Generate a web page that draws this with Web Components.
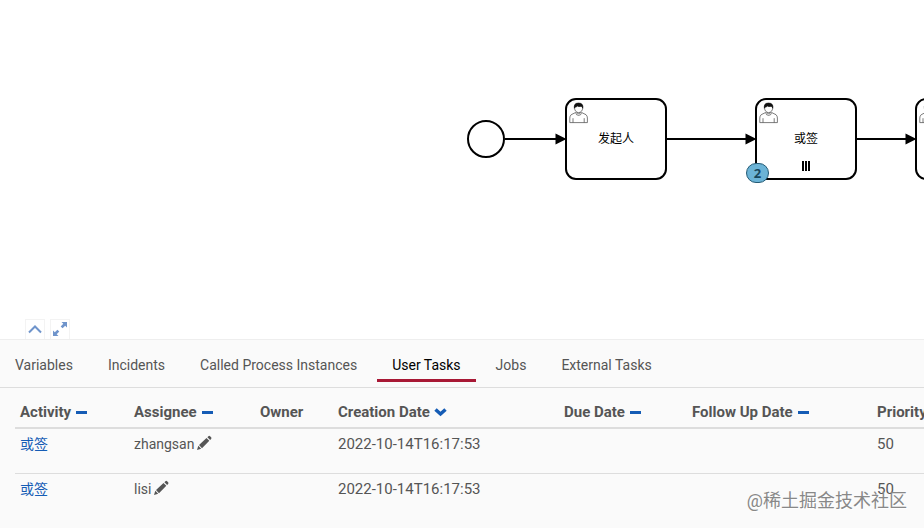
<!DOCTYPE html>
<html lang="en">
<head>
<meta charset="utf-8">
<title>Process instance</title>
<style>
html, body { height: 100%; }
body { margin: 0; background: #fff; overflow: hidden; font-family: Roboto, "Noto Sans CJK SC", sans-serif; font-size: 14px; line-height: 20px; color: #555; }
</style>
</head>
<body>
<process-page></process-page>
<script>
const define = (name, html, setup) => {
  const template = document.createElement('template');
  template.innerHTML = html;
  customElements.define(name, class extends HTMLElement {
    constructor() {
      super();
      this.attachShadow({ mode: 'open' }).append(template.content.cloneNode(true));
    }
    connectedCallback() { if (setup) setup(this, this.shadowRoot); }
  });
};

define('bpmn-task', `
<style>
:host { position: absolute; box-sizing: border-box; width: 102px; height: 82px; border: 2px solid #000; border-radius: 11px; background: #fff; color: #000; display: grid; place-items: center; font-size: 12px; line-height: 16px; }
.user { position: absolute; left: 2px; top: 2px; }
.multi { position: absolute; left: 45px; bottom: 7px; display: none; }
:host([multi]) .multi { display: block; }
</style>
<svg class="user" width="20" height="22" viewBox="0 0 20 22" fill="#fff" stroke="#444" stroke-width=".7" aria-hidden="true">
  <path d="M6.6 10.500 2.200 12.700Q.8 14 .8 16v4.600h17.600V16q0-2-1.400-3.300l-4.400-2.200q-.4 2.900-3 2.900t-3-2.900Z"/>
  <path d="M4 20.500v-4.300M15.200 20.500v-4.300" fill="none"/>
  <path d="M8 9.400v1.500q1.600 1.700 3.200 0V9.400" />
  <ellipse cx="9.600" cy="6.200" rx="4" ry="4.400"/>
  <path d="M5.400 6.200Q4.500 1.200 9.400 1.100q5.200 0 4.400 5.100-.6-1.800-1.700-1.900-2.400.6-3.600-.3-1.200 1.100-2.200.9Z" fill="#111" stroke="#111"/>
</svg>
<slot></slot>
<svg class="multi" width="9" height="10" viewBox="0 0 9 10" aria-hidden="true"><path d="M0 0h2v10H0zM3 0h2v10H3zM6 0h2v10H6z"/></svg>`);

define('instance-badge', `
<style>
:host { position: absolute; box-sizing: border-box; width: 23px; height: 20px; border: 1px solid #245b75; border-radius: 10px; background: #6bb3d6; color: #17465c; font: bold 13px/18px "Open Sans", sans-serif; text-align: center; }
</style><slot></slot>`);

define('process-diagram', `
<style>
:host { display: block; position: relative; overflow: hidden; }
.flows { position: absolute; left: 0; top: 0; }
.tools { position: absolute; left: 25px; bottom: 0; display: flex; gap: 5px; }
button { width: 20px; height: 20px; padding: 0 0 2px; border: 1px solid #f3f3f3; border-bottom: 0; background: #fff; display: grid; place-items: center; color: #6f94cb; }
.one { left: 565px; top: 98px; } .two { left: 755px; top: 98px; } .three { left: 915px; top: 98px; }
instance-badge { left: 746px; top: 163px; }
</style>
<bpmn-task class="one">发起人</bpmn-task>
<bpmn-task class="two" multi>或签</bpmn-task>
<bpmn-task class="three"></bpmn-task>
<svg class="flows" width="924" height="200" viewBox="0 0 924 200" aria-hidden="true">
  <circle cx="486" cy="139" r="18" fill="#fff" stroke="#000" stroke-width="2"/>
  <path d="M505 139h52M667 139h80M857 139h50" stroke="#000" stroke-width="2"/>
  <path d="m555.500 133.500 11 5.500-11 5.500ZM745.500 133.500l11 5.500-11 5.500ZM905.500 133.500l11 5.500-11 5.500Z"/>
</svg>
<instance-badge>2</instance-badge>
<div class="tools">
  <button aria-label="Collapse diagram"><svg width="14" height="10" viewBox="0 0 14 10" fill="none" stroke="currentColor" stroke-width="2"><path d="m1 8.500 6-6 6 6"/></svg></button>
  <button aria-label="Maximize"><svg width="16" height="16" viewBox="0 0 16 16" fill="currentColor"><path d="M9.500 1H15v5.500l-1.800-1.800-2.600 2.600-1.900-1.900 2.600-2.600ZM1 9.500l1.800 1.800 2.600-2.600 1.900 1.900-2.600 2.600L6.500 15H1Z"/></svg></button>
</div>`);

define('tab-bar', `
<style>
:host { display: block; border-bottom: 1px solid #ddd; }
nav { display: flex; gap: 5px; height: 47px; align-items: flex-start; }
::slotted(a) { color: #555; text-decoration: none; padding: 15px 15px 4px; border-bottom: 3px solid transparent; white-space: nowrap; }
::slotted(a[aria-current]) { color: #000; border-bottom-color: #a81835; }
</style><nav><slot></slot></nav>`);

define('sort-button', `
<style>
:host { display: inline-block; vertical-align: middle; margin: 0 0 2px 4px; }
button { display: block; padding: 0; border: 0; background: none; color: #155cb5; }
svg { display: block; }
.down { display: none; }
:host([down]) .down { display: block; } :host([down]) .flat { display: none; }
</style>
<button aria-label="Sort"><svg class="flat" width="13" height="12" viewBox="0 0 13 12"><path d="M1 5h11v3H1z" fill="currentColor"/></svg><svg class="down" width="13" height="12" viewBox="0 0 13 12"><path d="m1.500 3.500 5 4.500 5-4.500" fill="none" stroke="currentColor" stroke-width="3.500"/></svg></button>`);

define('edit-button', `
<style>
:host { display: inline-block; vertical-align: middle; margin: 0 0 4px 2px; }
button { display: block; padding: 0; border: 0; background: none; color: #555; } svg { display: block; }
</style>
<button aria-label="Edit assignee"><svg width="16" height="16" viewBox="0 0 16 16" fill="currentColor"><path d="m1 15 1.300-4.200 2.900 2.900ZM3 10l7.500-7 2.800 2.800-7.300 7.400ZM11.400 2.200l1-1q1-.7 1.700 0l1 1q.8.8 0 1.700l-1 1Z"/></svg></button>`);

define('task-table', `
<style>
:host { display: block; padding: 9px 0 0 15px; overflow: hidden; }
table { border-collapse: separate; border-spacing: 0; table-layout: fixed; width: 108%; min-width: 980px; }
th, td { padding: 5px; text-align: left; vertical-align: top; white-space: nowrap; box-sizing: border-box; }
th { border-bottom: 2px solid #ddd; font-weight: 700; font-size: 15px; }
td { height: 45px; border-bottom: 1px solid #ddd; }
tbody tr:last-child td { border-bottom: 0; }
.date { font-size: 15px; }
a { color: #155cb5; text-decoration: none; }
.c1 { width: 114px; } .c2 { width: 126px; } .c3 { width: 78px; } .c4 { width: 226px; } .c5 { width: 128px; } .c6 { width: 185px; }
</style>
<table>
<colgroup><col class="c1"><col class="c2"><col class="c3"><col class="c4"><col class="c5"><col class="c6"><col></colgroup>
<thead><tr><th>Activity<sort-button></sort-button></th><th>Assignee<sort-button></sort-button></th><th>Owner</th><th>Creation Date<sort-button down></sort-button></th><th>Due Date<sort-button></sort-button></th><th>Follow Up Date<sort-button></sort-button></th><th>Priority</th></tr></thead>
<tbody></tbody>
</table>`, (host, root) => {
  root.querySelector('tbody').innerHTML = ['zhangsan', 'lisi'].map(name =>
    `<tr><td><a href="#activity">或签</a></td><td>${name}<edit-button></edit-button></td><td></td><td class="date">2022-10-14T16:17:53</td><td></td><td></td><td class="date">50</td></tr>`).join('');
});

define('process-page', `
<style>
:host { display: flex; flex-direction: column; height: 100vh; position: relative; overflow: hidden; }
process-diagram { flex: 1; min-height: 200px; }
section { border-top: 1px solid #eee; background: #fafafa; padding-bottom: 9px; }
.mark { position: absolute; right: 17px; bottom: 14px; font-size: 18px; line-height: 26px; color: #888; text-shadow: 1px 1px 1px #fff; pointer-events: none; }
</style>
<process-diagram></process-diagram>
<section>
<tab-bar><a href="#variables">Variables</a><a href="#incidents">Incidents</a><a href="#called">Called Process Instances</a><a href="#tasks" aria-current="page">User Tasks</a><a href="#jobs">Jobs</a><a href="#external">External Tasks</a></tab-bar>
<task-table></task-table>
</section>
<div class="mark">@稀土掘金技术社区</div>`);
</script>
</body>
</html>
